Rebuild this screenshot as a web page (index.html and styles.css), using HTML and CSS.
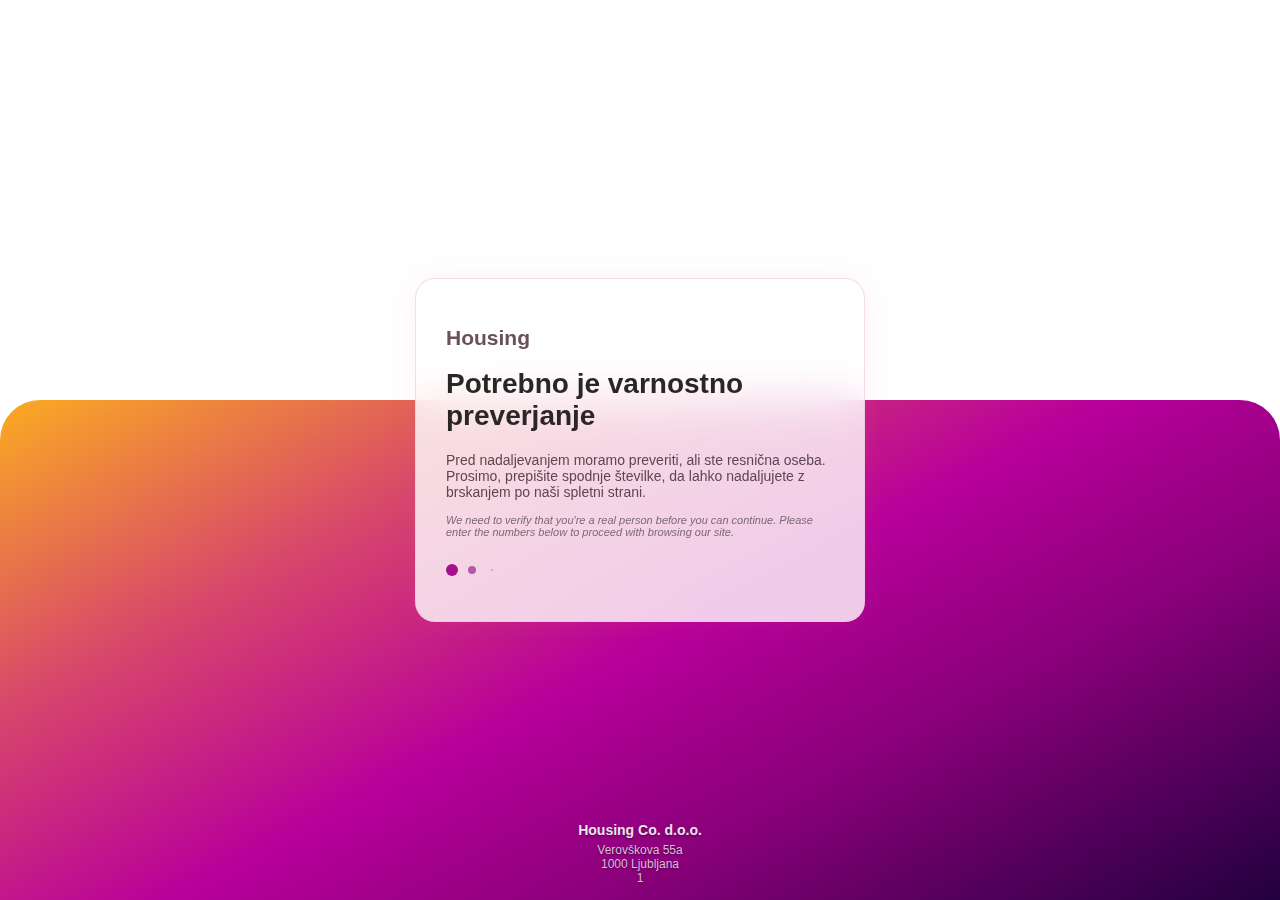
FILE: index.html
```html
<!DOCTYPE html>
<html lang="sl">
<head>
<meta charset="utf-8">
<title>Housing – Varnostno preverjanje</title>
<link rel="stylesheet" href="styles.css">
</head>
<body>
<div class="page">
  <div class="backdrop">
    <footer class="footer">
      <div class="footer-name">Housing Co. d.o.o.</div>
      <div class="footer-addr">Verovškova 55a<br>1000 Ljubljana<br>1</div>
    </footer>
  </div>
  <main class="card">
    <div class="brand">Housing</div>
    <h1 class="title">Potrebno je varnostno preverjanje</h1>
    <p class="lead">Pred nadaljevanjem moramo preveriti, ali ste resnična oseba. Prosimo, prepišite spodnje številke, da lahko nadaljujete z brskanjem po naši spletni strani.</p>
    <p class="note">We need to verify that you're a real person before you can continue. Please enter the numbers below to proceed with browsing our site.</p>
    <div class="loader">
      <span class="dot dot-1"></span>
      <span class="dot dot-2"></span>
      <span class="dot dot-3"></span>
    </div>
  </main>
</div>
</body>
</html>
```
FILE: styles.css
```css
* { box-sizing: border-box; }
html, body { margin: 0; padding: 0; }
body {
  background: #ffffff;
  font-family: "Liberation Sans", Arial, sans-serif;
  overflow: hidden;
}
.page {
  position: relative;
  height: 900px;
  display: flex;
  align-items: center;
  justify-content: center;
}
.backdrop {
  position: absolute;
  left: 0;
  right: 0;
  bottom: 0;
  height: 500px;
  border-radius: 40px 40px 0 0;
  background: linear-gradient(152deg, #fbab22 0%, #d8486a 26%, #b8009a 50%, #880079 70%, #22003f 100%);
  display: flex;
  flex-direction: column;
  justify-content: flex-end;
  align-items: center;
  padding-bottom: 15px;
  z-index: 0;
}
.footer {
  text-align: center;
  color: #e9d3e6;
  text-shadow: 0 1px 2px rgba(30, 0, 30, 0.55);
}
.footer-name {
  font-size: 14px;
  font-weight: bold;
  line-height: 16px;
  color: #f1e2ef;
  margin-bottom: 5px;
}
.footer-addr {
  font-size: 12px;
  line-height: 14px;
  color: #dcbcd8;
}
.card {
  position: relative;
  z-index: 1;
  width: 450px;
  height: 344px;
  padding: 46px 30px 40px;
  border-radius: 20px;
  border: 1px solid rgba(240, 190, 215, 0.55);
  background: rgba(255, 255, 255, 0.8);
  backdrop-filter: blur(24px);
  -webkit-backdrop-filter: blur(24px);
  box-shadow: 0 0 28px rgba(220, 120, 170, 0.10);
}
.brand {
  font-size: 21px;
  font-weight: bold;
  line-height: 26px;
  color: #6a5058;
  margin: 0 0 17px;
}
.title {
  font-size: 28px;
  font-weight: bold;
  line-height: 32px;
  color: #2a2628;
  margin: 0 0 20px;
}
.lead {
  font-size: 14px;
  line-height: 16px;
  color: #5c4751;
  margin: 0 0 14px;
}
.note {
  font-size: 11px;
  line-height: 12px;
  font-style: italic;
  color: #7c6a73;
  margin: 0 0 26px;
}
.loader {
  display: flex;
  align-items: center;
  gap: 8px;
  height: 12px;
}
.dot {
  width: 12px;
  height: 12px;
  display: flex;
  align-items: center;
  justify-content: center;
}
.dot::before {
  content: "";
  display: block;
  border-radius: 50%;
}
.dot-1::before { width: 12px; height: 12px; background: #a2108c; }
.dot-2::before { width: 8px; height: 8px; background: #b35aa8; }
.dot-3::before { width: 2px; height: 2px; background: #c49ab8; }
```
